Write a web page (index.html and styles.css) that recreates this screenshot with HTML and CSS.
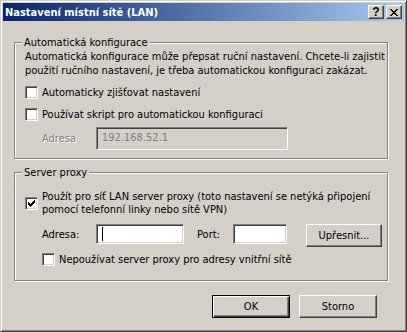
FILE: index.html
```html
<!DOCTYPE html>
<html lang="cs">
<head>
    <meta charset="UTF-8">
    <title>Nastavení místní sítě (LAN)</title>
    <link rel="stylesheet" href="styles.css">
</head>
<body>

<div class="window">
    <div class="titlebar">
        <span class="title">Nastavení místní sítě (LAN)</span>
        <span class="tb-btn help">?</span>
        <span class="tb-btn close">
            <svg width="8" height="7" viewBox="0 0 8 7" shape-rendering="crispEdges">
                <path d="M0 0h2v1h-2zM6 0h2v1h-2zM1 1h2v1h-2zM5 1h2v1h-2zM2 2h4v1h-4zM3 3h2v1h-2zM2 4h4v1h-4zM1 5h2v1h-2zM5 5h2v1h-2zM0 6h2v1h-2zM6 6h2v1h-2z" fill="#000"/>
            </svg>
        </span>
    </div>

    <div class="content">
        <div class="group group-auto">
            <span class="legend">Automatická konfigurace</span>
            <p class="note">Automatická konfigurace může přepsat ruční nastavení. Chcete-li zajistit<br>použití ručního nastavení, je třeba automatickou konfiguraci zakázat.</p>
            <div class="check check-detect"><span class="box"></span><span>Automaticky zjišťovat nastavení</span></div>
            <div class="check check-script"><span class="box"></span><span>Používat skript pro automatickou konfiguraci</span></div>
            <div class="field-row script-row">
                <span class="field-label disabled">Adresa</span>
                <span class="edit edit-disabled edit-script">192.168.52.1</span>
            </div>
        </div>

        <div class="group group-proxy">
            <span class="legend">Server proxy</span>
            <div class="check check-proxy">
                <span class="box">
                    <svg width="7" height="7" viewBox="0 0 7 7" shape-rendering="crispEdges">
                        <path d="M6 0h1v1h-1zM5 1h2v1h-2zM0 2h1v1h-1zM4 2h3v1h-3zM0 3h2v1h-2zM3 3h3v1h-3zM0 4h5v1h-5zM1 5h3v1h-3zM2 6h1v1h-1z" fill="#000"/>
                    </svg>
                </span>
                <span>Použít pro síť LAN server proxy (toto nastavení se netýká připojení<br>pomocí telefonní linky nebo sítě VPN)</span>
            </div>
            <div class="field-row proxy-row">
                <span class="field-label">Adresa:</span>
                <span class="edit edit-addr"><span class="caret"></span></span>
                <span class="field-label port-label">Port:</span>
                <span class="edit edit-port"></span>
                <span class="button advanced">Upřesnit...</span>
            </div>
            <div class="check check-bypass"><span class="box"></span><span>Nepoužívat server proxy pro adresy vnitřní sítě</span></div>
        </div>

        <div class="actions">
            <span class="button default">OK</span>
            <span class="button">Storno</span>
        </div>
    </div>
</div>

</body>
</html>
```

FILE: styles.css
```css
body {
    margin: 0;
    background: #d4d0c8;
    font-family: "DejaVu Sans Condensed", "DejaVu Sans", sans-serif;
    font-size: 11px;
    color: #000;
}
.window {
    box-sizing: border-box;
    width: 407px;
    height: 332px;
    padding: 2px;
    background: #d4d0c8;
    border: 1px solid;
    border-color: #d4d0c8 #404040 #404040 #d4d0c8;
    box-shadow: inset 1px 1px #fff, inset -1px -1px #808080;
}
.titlebar {
    display: flex;
    align-items: center;
    height: 18px;
    padding: 0 2px;
    background: linear-gradient(to right, #0a246a, #a6caf0);
}
.title {
    flex: 1;
    color: #fff;
    font-weight: bold;
    font-size: 11px;
    white-space: nowrap;
}
.tb-btn {
    box-sizing: border-box;
    display: flex;
    align-items: center;
    justify-content: center;
    width: 16px;
    height: 14px;
    background: #d4d0c8;
    border: 1px solid;
    border-color: #fff #404040 #404040 #fff;
    box-shadow: inset -1px -1px #808080;
}
.help {
    margin-right: 2px;
    font-family: "Liberation Sans", sans-serif;
    font-weight: bold;
    font-size: 12px;
    line-height: 12px;
}
.close svg {
    display: block;
    margin-left: 0;
}

.content {
    padding: 21px 16px 0 11px;
}
.group {
    position: relative;
    box-sizing: border-box;
    width: 374px;
    padding-left: 10px;
    border: 1px solid #808080;
    box-shadow: inset 1px 1px #fff, 1px 1px #fff;
}
.group-auto {
    height: 117px;
}
.group-proxy {
    height: 109px;
    margin-top: 13px;
}
.legend {
    position: absolute;
    top: -7px;
    left: 7px;
    padding: 0 2px;
    line-height: 13px;
    background: #d4d0c8;
}
.note {
    margin: 7px 0 0;
    line-height: 14px;
    white-space: nowrap;
}
.check {
    display: flex;
    align-items: center;
    gap: 4px;
    line-height: 13px;
    white-space: nowrap;
}
.box {
    box-sizing: border-box;
    flex: none;
    display: flex;
    align-items: center;
    justify-content: center;
    width: 13px;
    height: 13px;
    background: #fff;
    border: 1px solid;
    border-color: #808080 #fff #fff #808080;
    box-shadow: inset 1px 1px #404040, inset -1px -1px #d4d0c8;
}
.check-detect {
    margin-top: 8px;
}
.check-script {
    margin-top: 9px;
}
.check-proxy {
    margin-top: 17px;
}
.check-bypass {
    margin-top: 6px;
    margin-left: 17px;
}

.field-row {
    display: flex;
    align-items: flex-start;
    margin-left: 17px;
}
.script-row {
    margin-top: 6px;
}
.proxy-row {
    margin-top: 8px;
}
.field-label {
    width: 54px;
    line-height: 21px;
}
.field-label.disabled {
    line-height: 23px;
    color: #808080;
    text-shadow: 1px 1px #fff;
}
.port-label {
    width: 36px;
    margin-left: 13px;
}
.edit {
    position: relative;
    box-sizing: border-box;
    height: 20px;
    padding-left: 5px;
    line-height: 16px;
    background: #fff;
    border: 1px solid;
    border-color: #808080 #fff #fff #808080;
    box-shadow: inset 1px 1px #404040, inset -1px -1px #d4d0c8;
}
.edit-disabled {
    background: #d4d0c8;
    color: #808080;
}
.edit-script {
    width: 192px;
    height: 23px;
    line-height: 19px;
}
.edit-addr {
    width: 88px;
}
.edit-port {
    width: 54px;
}
.caret {
    position: absolute;
    left: 5px;
    top: 2px;
    width: 1px;
    height: 14px;
    background: #000;
}

.button {
    box-sizing: border-box;
    display: flex;
    align-items: center;
    justify-content: center;
    width: 78px;
    height: 23px;
    background: #d4d0c8;
    border: 1px solid;
    border-color: #fff #404040 #404040 #fff;
    box-shadow: inset -1px -1px #808080;
}
.button.default {
    border-color: #000;
    box-shadow: inset 1px 1px #fff, inset -1px -1px #404040, inset -2px -2px #808080;
}
.advanced {
    width: 76px;
    height: 23px;
    margin-left: 19px;
}
.actions {
    display: flex;
    justify-content: flex-end;
    gap: 9px;
    margin-top: 14px;
    margin-right: 11px;
}
```
